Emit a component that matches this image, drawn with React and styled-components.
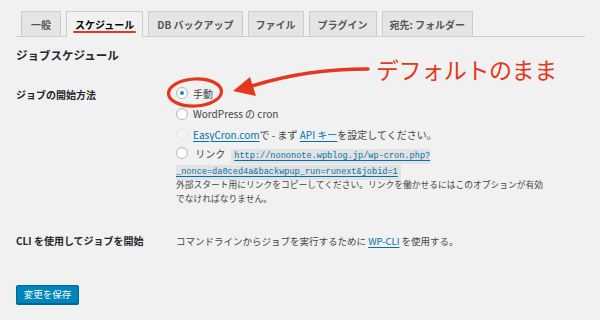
import React from 'react';
import styled, { createGlobalStyle } from 'styled-components';

const GlobalStyle = createGlobalStyle`
  html, body {
    margin: 0;
    background: #f1f1f1;
  }
  body {
    font-family: "Noto Sans CJK JP", "Noto Sans", sans-serif;
    color: #23282d;
  }
`;

const Page = styled.div`
  position: relative;
  width: 600px;
  height: 320px;
  overflow: hidden;
  padding: 0 15px 0 16px;
  box-sizing: border-box;
`;

const Tabs = styled.nav`
  display: flex;
  gap: 5px;
  padding: 11px 0 0 5px;
  border-bottom: 1px solid #cccccc;
  width: 569px;
  box-sizing: border-box;
`;

const Tab = styled.span`
  position: relative;
  display: flex;
  align-items: center;
  padding: 0 ${(p) => p.$pad}px;
  margin-bottom: -1px;
  box-sizing: border-box;
  border: 1px solid #cccccc;
  border-bottom: ${(p) => (p.$active ? '1px solid #f1f1f1' : 'none')};
  height: ${(p) => (p.$active ? 26 : 25)}px;
  background: ${(p) => (p.$active ? '#f1f1f1' : '#e5e5e5')};
  color: ${(p) => (p.$active ? '#000' : '#555')};
  font-size: 10px;
  font-weight: 700;
  white-space: nowrap;

  ${(p) =>
    p.$marked &&
    `
    &::after {
      content: '';
      position: absolute;
      left: 6px;
      right: 6px;
      bottom: 3px;
      height: 2px;
      background: #e4371c;
      border-radius: 1px;
    }
  `}
`;

const Heading = styled.h2`
  margin: 11px 0 0;
  font-size: 11.5px;
  line-height: 14px;
  font-weight: 700;
  color: #23282d;
`;

const Row = styled.div`
  display: grid;
  grid-template-columns: 160px 1fr;
  margin-top: ${(p) => p.$top}px;
`;

const Label = styled.div`
  font-size: 10px;
  font-weight: 700;
  line-height: 20px;
  padding-top: ${(p) => p.$pt || 0}px;
  color: #23282d;
`;

const Options = styled.div`
  display: flex;
  flex-direction: column;
`;

const Option = styled.label`
  display: flex;
  align-items: center;
  height: 20.5px;
  font-size: 10px;
  color: #444;
`;

const LinkOption = styled.div`
  font-size: 10px;
  color: #444;
  line-height: 16px;
  margin-top: 1px;
  width: 340px;
`;

const Radio = styled.span`
  display: inline-block;
  vertical-align: -1px;
  width: 12px;
  height: 12px;
  box-sizing: border-box;
  border-radius: 50%;
  margin-right: 5px;
  border: 1px solid ${(p) => (p.$disabled ? '#e6e6e6' : '#b4b9be')};
  background: ${(p) => (p.$disabled ? '#f3f3f3' : '#fff')};
  box-shadow: inset 0 1px 2px rgba(0, 0, 0, ${(p) => (p.$disabled ? 0.02 : 0.07)});
  position: relative;
  flex: none;

  ${(p) =>
    p.$checked &&
    `
    &::before {
      content: '';
      position: absolute;
      left: 3px;
      top: 3px;
      width: 4px;
      height: 4px;
      border-radius: 50%;
      background: #1e8cbe;
    }
  `}
`;

const A = styled.a`
  color: #0073aa;
  text-decoration: underline;
  text-underline-offset: 2px;
`;

const Code = styled.code`
  font-family: "Liberation Mono", "DejaVu Sans Mono", monospace;
  font-size: 8.6px;
  line-height: 10px;
  background: #e2e2e2;
  padding: 2px 3px 3px;
  margin-left: 6px;
  color: #0073aa;
  text-decoration: underline;
  text-underline-offset: 2px;
`;

const Description = styled.p`
  margin: 0;
  font-size: 8.75px;
  line-height: 14px;
  color: #444;
  width: 370px;
`;

const PlainText = styled.div`
  font-size: 9.5px;
  line-height: 20px;
  color: #444;
`;

const SaveButton = styled.button`
  margin-top: 34px;
  height: 19px;
  width: 63px;
  padding: 0;
  border: 1px solid #006799;
  border-radius: 2px;
  background: #0085ba;
  color: #fff;
  font-family: inherit;
  font-size: 9.5px;
  box-shadow: 0 1px 0 #006799;
`;

const Overlay = styled.svg`
  position: absolute;
  left: 0;
  top: 0;
  pointer-events: none;
`;

const Callout = styled.div`
  position: absolute;
  left: 376px;
  top: 53px;
  font-family: "Noto Sans CJK JP", sans-serif;
  font-size: 23px;
  line-height: 32px;
  color: #e4371c;
  letter-spacing: -0.4px;
  white-space: nowrap;
`;

const tabs = [
  { text: '一般', pad: 9 },
  { text: 'スケジュール', pad: 8, active: true, marked: true },
  { text: 'DB バックアップ', pad: 8 },
  { text: 'ファイル', pad: 7 },
  { text: 'プラグイン', pad: 8 },
  { text: '宛先: フォルダー', pad: 7 },
];

export default function App() {
  return (
    <>
      <GlobalStyle />
      <Page>
        <Tabs>
          {tabs.map((t) => (
            <Tab key={t.text} $pad={t.pad} $active={t.active} $marked={t.marked}>
              {t.text}
            </Tab>
          ))}
        </Tabs>

        <Heading>ジョブスケジュール</Heading>

        <Row $top={21}>
          <Label $pt={2}>ジョブの開始方法</Label>
          <Options>
            <Option>
              <Radio $checked />
              手動
            </Option>
            <Option>
              <Radio />
              WordPress の cron
            </Option>
            <Option>
              <Radio $disabled />
              <A href="#">EasyCron.com</A>で - まず&nbsp;<A href="#">API キー</A>を設定してください。
            </Option>
            <LinkOption>
              <Radio />
              &nbsp;リンク
              <Code>
                http://nononote.wpblog.jp/wp-cron.php?
                <wbr />
                _nonce=da0ced4a&amp;backwpup_run=runext&amp;jobid=1
              </Code>
            </LinkOption>
            <Description>
              外部スタート用にリンクをコピーしてください。リンクを働かせるにはこのオプションが有効でなければなりません。
            </Description>
          </Options>
        </Row>

        <Row $top={25}>
          <Label>CLI を使用してジョブを開始</Label>
          <PlainText>
            コマンドラインからジョブを実行するために <A href="#">WP-CLI</A> を使用する。
          </PlainText>
        </Row>

        <SaveButton>変更を保存</SaveButton>

        <Overlay width="600" height="320" viewBox="0 0 600 320">
          <ellipse
            cx="195"
            cy="92.5"
            rx="26.5"
            ry="13.5"
            fill="none"
            stroke="#e4371c"
            strokeWidth="3.2"
            transform="rotate(-3 195 92.5)"
          />
          <path
            d="M368 69 C 330 69, 290 74, 252 86"
            fill="none"
            stroke="#e4371c"
            strokeWidth="3.5"
            strokeLinecap="round"
          />
          <path d="M233 91 L250 77 L256 96 Z" fill="#e4371c" />
        </Overlay>
        <Callout>デフォルトのまま</Callout>
      </Page>
    </>
  );
}
